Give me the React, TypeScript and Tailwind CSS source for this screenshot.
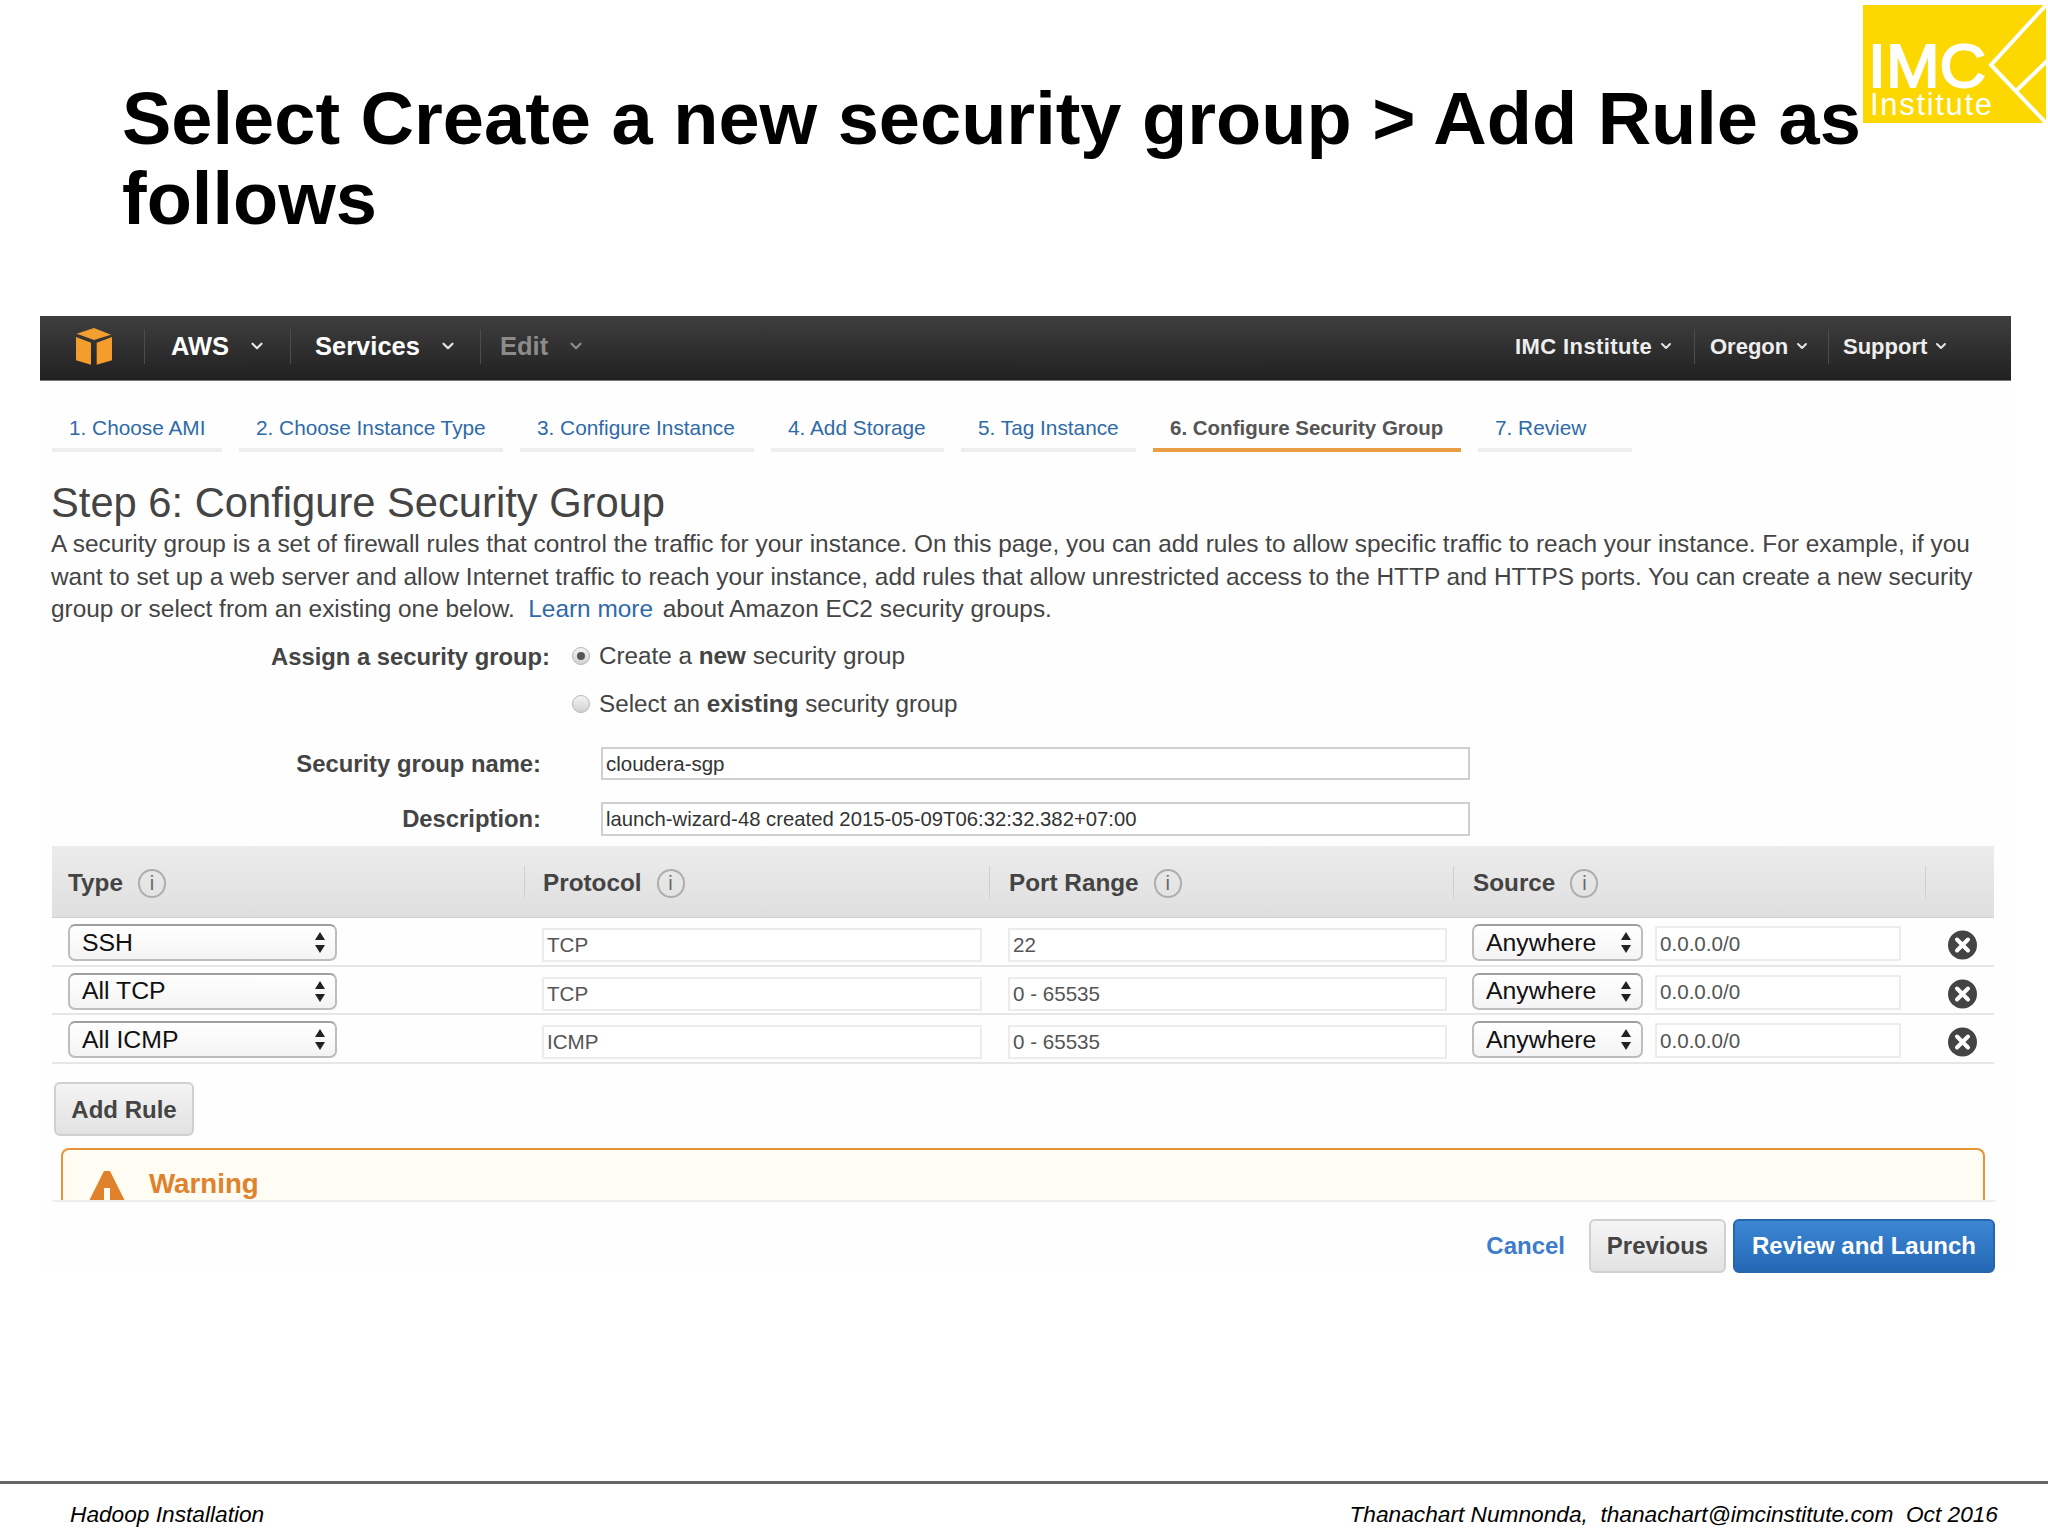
import React from "react";
import { ChevronDown } from "lucide-react";

const tabs = [
  { label: "1. Choose AMI", w: "w-[170px]" },
  { label: "2. Choose Instance Type", w: "w-[264px]" },
  { label: "3. Configure Instance", w: "w-[234px]" },
  { label: "4. Add Storage", w: "w-[173px]" },
  { label: "5. Tag Instance", w: "w-[175px]" },
  { label: "6. Configure Security Group", w: "w-[308px]", active: true },
  { label: "7. Review", w: "w-[154px]" },
];

const rules = [
  { type: "SSH", protocol: "TCP", port: "22" },
  { type: "All TCP", protocol: "TCP", port: "0 - 65535" },
  { type: "All ICMP", protocol: "ICMP", port: "0 - 65535" },
];

const CubeIcon = () => (
  <svg width="38" height="39" viewBox="9 5 38 39">
    <polygon points="10.7,11.7 28,6 45,12.7 28,18" fill="#f29f2f" />
    <polygon points="10,15 25,20.7 25,42.7 10,38.3" fill="#f49d2c" />
    <polygon points="30.7,20.7 46,15 46,38.3 30.7,42.7" fill="#f49d2c" />
  </svg>
);

const ImcLogo = () => (
  <svg width="185" height="118" viewBox="0 0 185 118" className="shrink-0 mt-[5px]">
    <rect x="0" y="0" width="183" height="118" fill="#fcd800" />
    <path d="M184 -1 L128 60 L184 119" stroke="#fff" strokeWidth="4" fill="none" />
    <path d="M185 55 L154 85" stroke="#fff" strokeWidth="4" fill="none" />
    <text x="5" y="82" fontFamily="'Liberation Sans', sans-serif" fontSize="62" fill="#fff" stroke="#fff" strokeWidth="2" textLength="118" lengthAdjust="spacingAndGlyphs">IMC</text>
    <text x="7" y="110" fontFamily="'Liberation Sans', sans-serif" fontSize="31" fill="#fff" textLength="122" lengthAdjust="spacing">Institute</text>
  </svg>
);

const InfoIcon = () => (
  <span className="w-[28px] h-[29px] rounded-full border-2 border-[#adadad] flex items-center justify-center text-[20px] leading-none text-[#666] ml-[15px]">i</span>
);

const UpDown = () => (
  <svg width="10" height="21" viewBox="0 0 10 21">
    <polygon points="5,0 10,8 0,8" fill="#222" />
    <polygon points="5,21 10,13 0,13" fill="#222" />
  </svg>
);

const Select = ({ value, w }: { value: string; w: string }) => (
  <div className={`${w} h-[37px] flex items-center justify-between pl-[12px] pr-[10px] rounded-[7px] border-2 border-[#bdbdbd] border-t-[#a0a0a0] bg-gradient-to-b from-[#ffffff] to-[#f4f4f4] text-[24.8px] text-[#111]`}>
    <span>{value}</span>
    <UpDown />
  </div>
);

const Field = ({ value, w, h }: { value: string; w: string; h: string }) => (
  <div className={`${w} ${h} flex items-center pl-[3px] pt-[1px] border-2 border-[#ececec] bg-white text-[20.6px] text-[#555] whitespace-nowrap`}>
    {value}
  </div>
);

const RemoveIcon = () => (
  <svg width="29" height="30" viewBox="0 0 29 30">
    <circle cx="14.5" cy="15" r="14.5" fill="#444" />
    <path d="M9 9.5 L20 20.5 M20 9.5 L9 20.5" stroke="#fff" strokeWidth="4" strokeLinecap="round" />
  </svg>
);

const Radio = ({ checked }: { checked?: boolean }) => (
  <span className="w-[18px] h-[18px] rounded-full border border-[#b5b5b5] bg-gradient-to-b from-[#f4f4f4] to-[#d2d2d2] flex items-center justify-center">
    {checked && <span className="w-[8px] h-[8px] rounded-full bg-[#555]" />}
  </span>
);

const NavItem = ({ label, w, pl, dim }: { label: string; w: string; pl: string; dim?: boolean }) => (
  <div className={`${w} ${pl} flex items-center h-[35px] border-l border-[#4c4c4c]`}>
    <span className={`text-[25.5px] font-bold ${dim ? "text-[#8b8b8b]" : "text-white"}`}>{label}</span>
    <ChevronDown className={`ml-[19px] ${dim ? "text-[#8b8b8b]" : "text-[#e5e5e5]"}`} size={18} strokeWidth={3} />
  </div>
);

const NavRight = ({ label, w, pl, divider, spaced }: { label: string; w: string; pl?: string; divider?: boolean; spaced?: boolean }) => (
  <div className={`${w} ${pl ?? ""} flex items-center h-[35px] ${divider ? "border-l border-[#4c4c4c]" : ""}`}>
    <span className={`text-[22px] font-bold text-[#eeeeee] ${spaced ? "tracking-[0.4px]" : ""}`}>{label}</span>
    <ChevronDown className="ml-[6px] text-[#e5e5e5]" size={16} strokeWidth={3} />
  </div>
);

const HeaderCell = ({ label, pl, divider = true }: { label?: string; pl?: string; divider?: boolean }) => (
  <div className={`${pl ?? ""} flex items-center justify-between`}>
    {label ? (
      <div className="flex items-center pt-[3px]">
        <span className="text-[24.3px] font-bold text-[#444]">{label}</span>
        <InfoIcon />
      </div>
    ) : (
      <span />
    )}
    {divider && <span className="w-px h-[32px] bg-[#cfcfcf]" />}
  </div>
);

export default function App() {
  return (
    <div className="w-[2048px] h-[1536px] bg-white flex flex-col overflow-hidden font-['Liberation_Sans',sans-serif]">
      {/* Slide title */}
      <div className="h-[316px] flex items-start pl-[122px]">
        <h1 className="w-[1741px] pt-[79px] text-[74px] leading-[80px] font-bold text-black whitespace-nowrap">
          Select Create a new security group &gt; Add Rule as
          <br />
          follows
        </h1>
        <ImcLogo />
      </div>

      {/* Console screenshot */}
      <div className="w-[1971px] ml-[40px] h-[957px] bg-[#fefefe] flex flex-col">
        {/* Top nav */}
        <div className="h-[65px] pb-[4px] flex items-center bg-gradient-to-b from-[#3f3f3f] to-[#212121] border-b border-[#777]">
          <div className="w-[104px] pl-[35px] flex items-center">
            <CubeIcon />
          </div>
          <NavItem label="AWS" w="w-[146px]" pl="pl-[26px]" />
          <NavItem label="Services" w="w-[190px]" pl="pl-[24px]" />
          <NavItem label="Edit" w="w-[150px]" pl="pl-[19px]" dim />
          <div className="ml-auto flex">
            <NavRight label="IMC Institute" w="w-[179px]" spaced />
            <NavRight label="Oregon" w="w-[134px]" pl="pl-[15px]" divider />
            <NavRight label="Support" w="w-[183px]" pl="pl-[14px]" divider />
          </div>
        </div>

        {/* Wizard steps */}
        <div className="mt-[27px] ml-[12px] flex gap-[17px]">
          {tabs.map((tab) => (
            <div
              key={tab.label}
              className={`${tab.w} h-[44px] pl-[17px] flex items-center border-b-4 whitespace-nowrap ${
                tab.active ? "border-[#eb9d45] text-[#555] font-bold text-[20.5px]" : "border-[#eeeef0] text-[#2f6aa8] text-[20.8px]"
              }`}
            >
              {tab.label}
            </div>
          ))}
        </div>

        <div className="ml-[12px] flex flex-col">
          <h2 className="mt-[26px] -ml-px h-[50px] leading-[50px] text-[41.7px] text-[#444]">Step 6: Configure Security Group</h2>
          <p className="-ml-px h-[98px] text-[24.4px] leading-[32.6px] text-[#444] whitespace-pre">
            A security group is a set of firewall rules that control the traffic for your instance. On this page, you can add rules to allow specific traffic to reach your instance. For example, if you
            <br />
            want to set up a web server and allow Internet traffic to reach your instance, add rules that allow unrestricted access to the HTTP and HTTPS ports. You can create a new security
            <br />
            group or select from an existing one below.  <span className="text-[#2f6aa8] mr-[3px]">Learn more</span> about Amazon EC2 security groups.
          </p>

          {/* Assign form */}
          <div className="mt-[10px] h-[40px] flex items-center">
            <span className="w-[498px] pt-[1px] text-right text-[23.8px] font-bold text-[#444]">Assign a security group:</span>
            <span className="ml-[22px]"><Radio checked /></span>
            <span className="ml-[9px] text-[24.25px] text-[#444]">Create a <b>new</b> security group</span>
          </div>
          <div className="mt-[8px] h-[40px] flex items-center pl-[520px]">
            <Radio />
            <span className="ml-[9px] text-[24.25px] text-[#444]">Select an <b>existing</b> security group</span>
          </div>
          <div className="mt-[23px] h-[33px] flex items-center">
            <span className="w-[489px] text-right text-[23.8px] font-bold text-[#444]">Security group name:</span>
            <div className="ml-[60px] w-[869px] h-[33px] pl-[3px] pt-[1px] flex items-center border-2 border-[#cfcfcf] bg-white text-[20.5px] text-[#333]">cloudera-sgp</div>
          </div>
          <div className="mt-[22px] h-[34px] flex items-center">
            <span className="w-[489px] text-right text-[23.8px] font-bold text-[#444]">Description:</span>
            <div className="ml-[60px] w-[869px] h-[34px] pl-[3px] flex items-center border-2 border-[#cfcfcf] bg-white text-[20.3px] text-[#333] whitespace-nowrap">launch-wizard-48 created 2015-05-09T06:32:32.382+07:00</div>
          </div>

          {/* Inbound rules table */}
          <div className="mt-[10px] w-[1942px]">
            <div className="h-[72px] grid grid-cols-[473px_465px_464px_472px_68px] bg-gradient-to-b from-[#ececec] to-[#dfdfdf] border-b border-[#cfcfcf]">
              <HeaderCell label="Type" pl="pl-[16px]" />
              <HeaderCell label="Protocol" pl="pl-[18px]" />
              <HeaderCell label="Port Range" pl="pl-[19px]" />
              <HeaderCell label="Source" pl="pl-[19px]" />
              <HeaderCell divider={false} />
            </div>
            {rules.map((rule) => (
              <div key={rule.type} className="h-[48.5px] grid grid-cols-[473px_465px_464px_472px_68px] border-b-2 border-[#e6e6e6]">
                <div className="pl-[16px] pt-[6px]">
                  <Select value={rule.type} w="w-[269px]" />
                </div>
                <div className="pl-[17px] pt-[10px]">
                  <Field value={rule.protocol} w="w-[440px]" h="h-[34px]" />
                </div>
                <div className="pl-[18px] pt-[10px]">
                  <Field value={rule.port} w="w-[439px]" h="h-[34px]" />
                </div>
                <div className="pl-[18px] pt-[6px] flex items-start gap-[12px]">
                  <Select value="Anywhere" w="w-[171px]" />
                  <div className="mt-[2px]">
                    <Field value="0.0.0.0/0" w="w-[246px]" h="h-[35px]" />
                  </div>
                </div>
                <div className="pl-[22px] pt-[12px]">
                  <RemoveIcon />
                </div>
              </div>
            ))}
          </div>

          <button className="mt-[18px] ml-[2px] w-[140px] h-[54px] pt-[2px] rounded-[6px] border-2 border-[#d0d0d0] bg-gradient-to-b from-[#f4f4f4] to-[#e2e2e2] text-[24px] font-bold text-[#444]">
            Add Rule
          </button>

          {/* Warning, cut off by the scroll area */}
          <div className="mt-[12px] ml-[9px] w-[1924px] h-[52px] overflow-hidden rounded-t-[8px] border-2 border-b-0 border-[#e8943a] bg-[#fffcf3] flex items-start">
            <svg width="36" height="29" viewBox="0 0 36 29" className="ml-[26px] mt-[21px] shrink-0">
              <polygon points="15,0 21,0 36,30 0,30" fill="#e0812b" />
              <rect x="15" y="17" width="6" height="12" fill="#fffcf3" />
            </svg>
            <span className="ml-[24px] mt-[18px] text-[27.7px] leading-[32px] font-bold text-[#e0812b]">Warning</span>
          </div>
          <div className="w-[1944px] h-[2px] bg-[#eeeeee]" />

          {/* Wizard buttons */}
          <div className="mt-[17px] w-[1943px] h-[54px] flex items-center justify-end">
            <span className="mr-[24px] text-[24px] font-bold text-[#3d7cc9]">Cancel</span>
            <button className="w-[137px] h-[54px] rounded-[6px] border-2 border-[#d0d0d0] bg-gradient-to-b from-[#f5f5f5] to-[#e2e2e2] text-[24px] font-bold text-[#444]">
              Previous
            </button>
            <button className="ml-[7px] w-[262px] h-[54px] rounded-[6px] border-2 border-[#2566ad] bg-gradient-to-b from-[#3d87d5] to-[#2368b5] text-[24px] font-bold text-white">
              Review and Launch
            </button>
          </div>
        </div>
      </div>

      {/* Slide footer */}
      <div className="mt-[208px] border-t-[3px] border-[#666]" />
      <div className="mt-[13px] h-[34px] pl-[70px] pr-[50px] flex items-center justify-between text-[22.7px] italic text-black whitespace-pre">
        <span>Hadoop Installation</span>
        <span>Thanachart Numnonda,  thanachart@imcinstitute.com  Oct 2016</span>
      </div>
    </div>
  );
}
